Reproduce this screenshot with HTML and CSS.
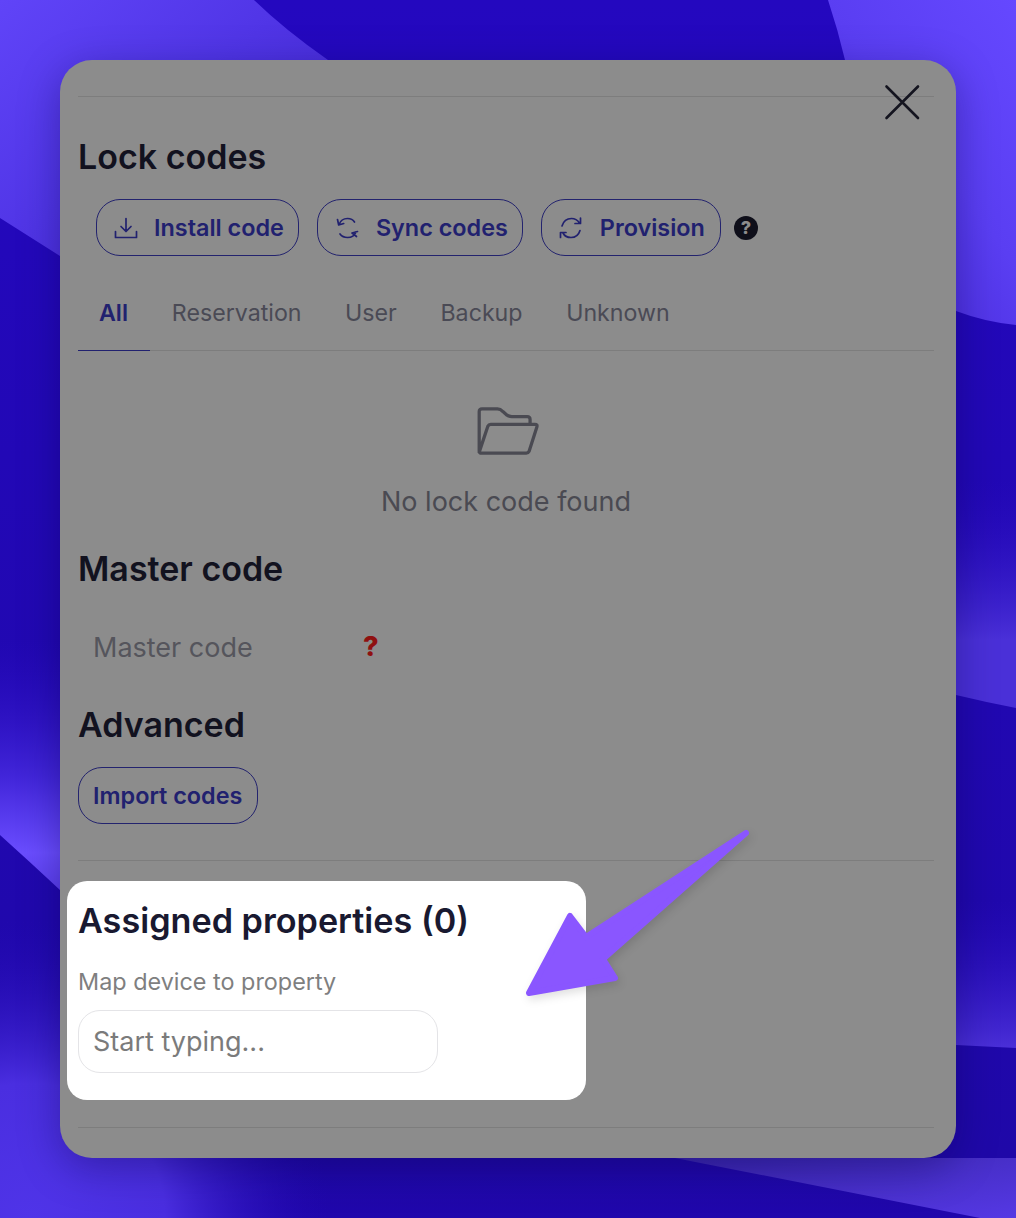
FILE: index.html
```html
<!DOCTYPE html>
<html lang="en">
<head>
    <meta charset="UTF-8">
    <meta name="viewport" content="width=device-width, initial-scale=1.0">
    <title>Lock codes</title>
    <link rel="stylesheet" href="styles.css">
</head>
<body>
    <!-- wallpaper behind the modal -->
    <svg class="backdrop" viewBox="0 0 1016 1218" aria-hidden="true">
        <defs>
            <linearGradient id="topLeft" x1="0" y1="0" x2="1" y2="0.9">
                <stop offset="0" stop-color="#6044f8"/>
                <stop offset="0.5" stop-color="#5035e6"/>
                <stop offset="1" stop-color="#4326d0"/>
            </linearGradient>
            <linearGradient id="topRight" x1="1" y1="0" x2="0.2" y2="1">
                <stop offset="0" stop-color="#6548ff"/>
                <stop offset="0.5" stop-color="#5a3ef2"/>
                <stop offset="1" stop-color="#4629d8"/>
            </linearGradient>
            <linearGradient id="leftBand" x1="0" y1="0" x2="0" y2="1">
                <stop offset="0" stop-color="#2a0cc4" stop-opacity="0"/>
                <stop offset="0.55" stop-color="#4226da"/>
                <stop offset="0.85" stop-color="#6a4dff"/>
                <stop offset="1" stop-color="#5c40ee"/>
            </linearGradient>
            <linearGradient id="rightBand" x1="0" y1="0" x2="0" y2="1">
                <stop offset="0" stop-color="#2a0cc4" stop-opacity="0"/>
                <stop offset="0.7" stop-color="#4a30d8"/>
                <stop offset="1" stop-color="#4a30d8"/>
            </linearGradient>
            <linearGradient id="rightLow" x1="0" y1="0" x2="0" y2="1">
                <stop offset="0" stop-color="#2a0cc4" stop-opacity="0"/>
                <stop offset="1" stop-color="#4a2fd8"/>
            </linearGradient>
            <radialGradient id="bottomLeft" gradientUnits="userSpaceOnUse" cx="30" cy="1218" r="300">
                <stop offset="0" stop-color="#4f34e8"/>
                <stop offset="0.45" stop-color="#4a2ee0"/>
                <stop offset="1" stop-color="#2208b4" stop-opacity="0"/>
            </radialGradient>
            <linearGradient id="bottomRight" x1="0" y1="0" x2="1" y2="1">
                <stop offset="0" stop-color="#3a26ae"/>
                <stop offset="1" stop-color="#5538e4"/>
            </linearGradient>
            <linearGradient id="base" x1="0" y1="0" x2="0" y2="1">
                <stop offset="0" stop-color="#2408bf"/>
                <stop offset="0.95" stop-color="#1f08a8"/>
                <stop offset="1" stop-color="#2007ac"/>
            </linearGradient>
        </defs>
        <rect width="1016" height="1218" fill="url(#base)"/>
        <path d="M0 890H340V1218H0Z" fill="url(#bottomLeft)"/>
        <path d="M0 0H254Q285 30 328 60L60 256L0 218Z" fill="url(#topLeft)"/>
        <path d="M828 0Q838 30 845 60L956 311Q985 322 1016 325V0Z" fill="url(#topRight)"/>
        <path d="M0 640H60V890Q30 862 0 835Z" fill="url(#leftBand)"/>
        <path d="M956 480H1016V708Q985 702 956 695Z" fill="url(#rightBand)"/>
        <path d="M956 900H1016V1048L956 1045Z" fill="url(#rightLow)"/>
        <path d="M675 1158H1016V1218H980Z" fill="url(#bottomRight)"/>
    </svg>

    <div class="modal">
        <button class="close-btn" aria-label="Close">
            <svg viewBox="0 0 36 36" width="36" height="36"><path d="M2.5 2.5L34 34M34 2.5L2.5 34"/></svg>
        </button>

        <hr class="rule rule-top">

        <h2 class="title title-lock">Lock codes</h2>
        <div class="actions">
            <button class="btn btn-install">
                <svg class="btn-icon" viewBox="0 0 24 24"><path d="M12 2.500V15M7 10.500l5 5 5-5M1.500 15.500V21.500H22.500V15.500"/></svg>
                Install code
            </button>
            <button class="btn btn-sync">
                <svg class="btn-icon" viewBox="0 0 24 24"><path d="M4 8.500C5.500 4.500 9 2.500 12.500 2.500c3 0 5.500 1 7 3.500M2.500 3.500l1.200 5.500 5-1.500M21 16c-1.500 4-5 5.500-8.500 5.500-3.500 0-6-1.500-7.500-3.500M22.500 15.500l-5.500 1.500 4.500 3.500"/></svg>
                Sync codes
            </button>
            <button class="btn btn-provision">
                <svg class="btn-icon" viewBox="0 0 24 24"><path d="M3 10C4.500 5 8.500 2.500 12.500 2.500c3 0 6 1.500 8 4.500M21.500 2v5.500H16M21 14.500c-1.500 5-5 7-9 7-3.500 0-6.500-1.500-8-4.500M1.500 21.500V16.500H7"/></svg>
                Provision
            </button>
            <span class="help-dot">?</span>
        </div>

        <div class="tabs">
            <span class="tab tab-active">All</span>
            <span class="tab">Reservation</span>
            <span class="tab">User</span>
            <span class="tab">Backup</span>
            <span class="tab">Unknown</span>
        </div>

        <div class="empty">
            <svg class="empty-icon" viewBox="0 0 64 50"><path d="M2 46V5Q2 2 5 2H21Q24 2 27 5L31 8.500Q33 10 36 10H52Q55 10 55 13V18M2 47L11 20Q12 18 14 18H60Q63 18 62 21L54 46Q53 48 51 48H3"/></svg>
            <div class="empty-text">No lock code found</div>
        </div>

        <h2 class="title title-master">Master code</h2>
        <div class="master-row">
            <span class="master-label">Master code</span>
            <span class="master-flag">?</span>
        </div>

        <h2 class="title title-advanced">Advanced</h2>
        <button class="btn btn-import">Import codes</button>

        <hr class="rule rule-mid">

        <div class="spotlight">
            <h2 class="title title-assigned">Assigned properties (0)</h2>
            <label class="field-label" for="property">Map device to property</label>
            <input class="field-input" id="property" type="text" placeholder="Start typing...">
        </div>

        <hr class="rule rule-bottom">
    </div>

    <!-- annotation arrow sits on top of everything -->
    <svg class="arrow" viewBox="0 0 1016 1218" aria-hidden="true">
        <path d="M529 993L570 916L586 937L746 833L603 959L615 978Z"/>
    </svg>
</body>
</html>
```

FILE: styles.css
```css
* {
    box-sizing: border-box;
}
body {
    margin: 0;
    padding: 60px;
    height: 1218px;
    overflow: hidden;
    position: relative;
    font-family: Inter, "Liberation Sans", sans-serif;
    background-color: #2408bf;
}
.backdrop {
    position: absolute;
    top: 0;
    left: 0;
    width: 1016px;
    height: 1218px;
}
.modal {
    position: relative;
    width: 896px;
    height: 1098px;
    padding: 36px 22px 0 18px;
    background-color: #8c8c8c;
    border-radius: 32px;
    box-shadow: 0 10px 40px rgba(10, 0, 70, 0.35);
}
.close-btn {
    position: absolute;
    top: 24px;
    right: 36px;
    width: 36px;
    height: 36px;
    padding: 0;
    background: none;
    border: none;
}
.close-btn svg {
    display: block;
    fill: none;
    stroke: #14141f;
    stroke-width: 2.6;
    stroke-linecap: round;
}
.rule {
    margin: 0;
    border: none;
    border-top: 1px solid #7d7d7d;
}
.title {
    margin: 0;
    font-size: 34px;
    line-height: 40px;
    font-weight: 600;
    color: #12121f;
}
.title-lock {
    margin-top: 40px;
}
.actions {
    display: flex;
    align-items: center;
    margin-top: 22px;
    margin-left: 18px;
    gap: 18px;
}
.btn {
    display: flex;
    align-items: center;
    height: 57px;
    padding: 0 14px 0 17px;
    gap: 16px;
    font-family: inherit;
    font-size: 23.4px;
    font-weight: 600;
    color: #21216f;
    background: none;
    border: 1px solid #23236e;
    border-radius: 24px;
}
.btn-sync {
    gap: 17px;
}
.btn-provision {
    gap: 17px;
    padding-right: 15px;
}
.btn-icon {
    width: 24px;
    height: 24px;
    flex-shrink: 0;
    fill: none;
    stroke: #21216f;
    stroke-width: 1.7;
    stroke-linecap: round;
    stroke-linejoin: round;
}
.help-dot {
    width: 24px;
    height: 24px;
    margin-left: -5px;
    font-size: 18px;
    line-height: 24px;
    font-weight: 800;
    text-align: center;
    color: #8c8c8c;
    background-color: #0f0f1a;
    border-radius: 50%;
}
.tabs {
    display: flex;
    margin-top: 24px;
    height: 71px;
    border-bottom: 1px solid #7d7d7d;
}
.tab {
    height: 71px;
    padding: 0 21.8px;
    font-size: 23.2px;
    line-height: 66px;
    color: #4a4a55;
}
.tab-active {
    padding: 0 22px 0 21px;
    font-weight: 600;
    color: #21216f;
    border-bottom: 1px solid #21216f;
}
.empty {
    display: flex;
    flex-direction: column;
    align-items: center;
    padding-top: 56px;
}
.empty-icon {
    width: 64px;
    height: 48px;
    margin-left: 4px;
    fill: none;
    stroke: #4a4a52;
    stroke-width: 3.4;
    stroke-linejoin: round;
    stroke-linecap: round;
}
.empty-text {
    margin-top: 29px;
    font-size: 27px;
    line-height: 36px;
    color: #4a4a52;
}
.title-master {
    margin-top: 29px;
}
.master-row {
    display: flex;
    align-items: center;
    margin-top: 36px;
    height: 44px;
    padding-left: 15px;
}
.master-label {
    width: 270px;
    font-size: 27px;
    color: #55555c;
}
.master-flag {
    margin-top: -2px;
    font-size: 27px;
    font-weight: 800;
    color: #8f1010;
}
.title-advanced {
    margin-top: 36px;
}
.btn-import {
    margin-top: 22px;
    padding: 0 15px 0 14px;
}
.rule-mid {
    margin-top: 36px;
}
.spotlight {
    position: relative;
    width: 519px;
    height: 219px;
    margin-top: 20px;
    margin-left: -11px;
    padding: 20px 0 0 11px;
    background-color: #fff;
    border-radius: 20px;
}
.title-assigned {
    font-size: 34.2px;
    color: #191930;
}
.field-label {
    display: block;
    margin-top: 26px;
    font-size: 23.4px;
    line-height: 30px;
    color: #7f7f7f;
}
.field-input {
    display: block;
    width: 360px;
    height: 63px;
    margin-top: 13px;
    padding: 0 14px;
    font-family: inherit;
    font-size: 27px;
    color: #333;
    background: #fff;
    border: 1px solid #e4e4e7;
    border-radius: 22px;
}
.field-input::placeholder {
    color: #7b7b7b;
    opacity: 1;
}
.rule-bottom {
    margin-top: 27px;
}
.arrow {
    position: absolute;
    top: 0;
    left: 0;
    width: 1016px;
    height: 1218px;
    pointer-events: none;
    fill: #8a56ff;
    stroke: #8a56ff;
    stroke-width: 6;
    stroke-linejoin: round;
    filter: drop-shadow(2px 4px 4px rgba(0, 0, 0, 0.12));
}
```
